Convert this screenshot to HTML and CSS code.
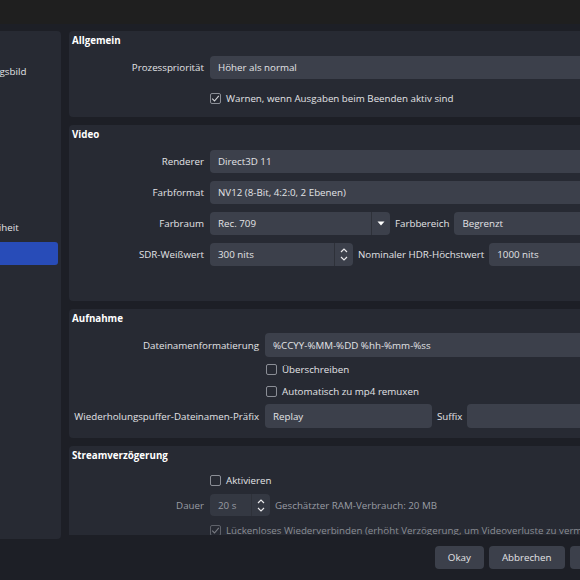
FILE: index.html
```html
<!DOCTYPE html>
<html>

<head>
    <title>Einstellungen</title>
    <link rel="stylesheet" href="styles.css">
</head>

<body>
    <div class="titlebar"></div>

    <div class="window">
        <div class="main">
            <nav class="sidebar">
                <div class="nav-item">Allgemein</div>
                <div class="nav-item">Erscheinungsbild</div>
                <div class="nav-item">Stream</div>
                <div class="nav-item">Ausgabe</div>
                <div class="nav-item">Audio</div>
                <div class="nav-item">Video</div>
                <div class="nav-item">Hotkeys</div>
                <div class="nav-item">Barrierefreiheit</div>
                <div class="nav-item selected">Erweitert</div>
            </nav>

            <div class="content">
                <section class="group">
                    <h3 class="group-title">Allgemein</h3>
                    <div class="form">
                        <div class="row">
                            <span class="label">Prozesspriorität</span>
                            <div class="field grow">Höher als normal</div>
                        </div>
                        <div class="row check-row">
                            <span class="checkbox checked">
                                <svg width="9" height="9" viewBox="0 0 9 9"><path d="M1.2 4.6l2.3 2.4L7.8 1.8" /></svg>
                            </span>
                            Warnen, wenn Ausgaben beim Beenden aktiv sind
                        </div>
                    </div>
                </section>

                <section class="group">
                    <h3 class="group-title">Video</h3>
                    <div class="form video-form">
                        <div class="row">
                            <span class="label">Renderer</span>
                            <div class="field grow">Direct3D 11</div>
                        </div>
                        <div class="row">
                            <span class="label">Farbformat</span>
                            <div class="field grow">NV12 (8-Bit, 4:2:0, 2 Ebenen)</div>
                        </div>
                        <div class="row">
                            <span class="label">Farbraum</span>
                            <div class="field combo" id="colorSpace">
                                <span class="field-text">Rec. 709</span>
                                <span class="combo-arrow">
                                    <svg width="8" height="5" viewBox="0 0 8 5"><path d="M0.5 0.5h7L4 4.5z" /></svg>
                                </span>
                            </div>
                            <span class="inline-label">Farbbereich</span>
                            <div class="field grow">Begrenzt</div>
                        </div>
                        <div class="row">
                            <span class="label">SDR-Weißwert</span>
                            <div class="field spin" id="sdrWhite">
                                <span class="field-text">300 nits</span>
                                <span class="spin-arrows">
                                    <svg width="8" height="5" viewBox="0 0 8 5"><path d="M1 4l3-3 3 3" /></svg>
                                    <svg width="8" height="5" viewBox="0 0 8 5"><path d="M1 1l3 3 3-3" /></svg>
                                </span>
                            </div>
                            <span class="inline-label">Nominaler HDR-Höchstwert</span>
                            <div class="field grow">1000 nits</div>
                        </div>
                    </div>
                </section>

                <section class="group">
                    <h3 class="group-title">Aufnahme</h3>
                    <div class="form tight">
                        <div class="row">
                            <span class="label wide">Dateinamenformatierung</span>
                            <div class="field grow">%CCYY-%MM-%DD %hh-%mm-%ss</div>
                        </div>
                        <div class="row check-row wide">
                            <span class="checkbox"></span>
                            Überschreiben
                        </div>
                        <div class="row check-row wide">
                            <span class="checkbox"></span>
                            Automatisch zu mp4 remuxen
                        </div>
                        <div class="row">
                            <span class="label wide">Wiederholungspuffer-Dateinamen-Präfix</span>
                            <div class="field" id="replayPrefix">Replay</div>
                            <span class="inline-label">Suffix</span>
                            <div class="field grow"></div>
                        </div>
                    </div>
                </section>

                <section class="group">
                    <h3 class="group-title">Streamverzögerung</h3>
                    <div class="form stream">
                        <div class="row check-row">
                            <span class="checkbox"></span>
                            Aktivieren
                        </div>
                        <div class="row disabled">
                            <span class="label">Dauer</span>
                            <div class="field spin" id="delay">
                                <span class="field-text">20 s</span>
                                <span class="spin-arrows">
                                    <svg width="8" height="5" viewBox="0 0 8 5"><path d="M1 4l3-3 3 3" /></svg>
                                    <svg width="8" height="5" viewBox="0 0 8 5"><path d="M1 1l3 3 3-3" /></svg>
                                </span>
                            </div>
                            <span class="inline-label">Geschätzter RAM-Verbrauch: 20 MB</span>
                        </div>
                        <div class="row check-row disabled">
                            <span class="checkbox checked">
                                <svg width="9" height="9" viewBox="0 0 9 9"><path d="M1.2 4.6l2.3 2.4L7.8 1.8" /></svg>
                            </span>
                            Lückenloses Wiederverbinden (erhöht Verzögerung, um Videoverluste zu vermeiden)
                        </div>
                    </div>
                </section>
            </div>
        </div>

        <div class="buttons">
            <button>Okay</button>
            <button>Abbrechen</button>
            <button>Übernehmen</button>
        </div>
    </div>
</body>

</html>
```

FILE: styles.css
```css
body {
    margin: 0;
    width: 580px;
    height: 580px;
    overflow: hidden;
    background-color: #1d1f26;
    font-family: "Open Sans", "DejaVu Sans", sans-serif;
    font-size: 9.75px;
    color: #e2e3e6;
}

.titlebar {
    height: 24px;
    background-color: #1f1f1f;
}

.window {
    width: 760px;
    margin-left: -100px;
    padding-top: 7px;
}

.main {
    display: flex;
    align-items: flex-start;
    height: 508px;
}

.sidebar {
    flex-shrink: 0;
    width: 161px;
    height: 508px;
    padding: 3px 3px 0 0;
    box-sizing: border-box;
    background-color: #272a33;
    border-radius: 4px;
}

.nav-item {
    height: 23px;
    line-height: 23px;
    padding-left: 49px;
    margin-bottom: 3px;
    border-radius: 3px;
    white-space: nowrap;
}

.nav-item.selected {
    background-color: #284cb8;
}

.content {
    flex: 1;
    margin-left: 8px;
    height: 504px;
    overflow: hidden;
}

.group {
    background-color: #272a33;
    border-radius: 4px;
    margin-bottom: 8px;
}

.group-title {
    margin: 0;
    height: 20px;
    line-height: 20px;
    padding-left: 3px;
    font-size: 9.75px;
    font-weight: bold;
    color: #ffffff;
}

.form {
    display: flex;
    flex-direction: column;
    gap: 8px;
    padding: 5px 10px 7px 0;
}

.video-form {
    padding-bottom: 35px;
}

.form.tight {
    gap: 3px;
    padding: 4px 10px 10px 0;
}

.form.tight .row {
    height: 24px;
}

.form.tight .check-row {
    height: 19px;
}

.form.stream {
    gap: 3px;
    padding-top: 3px;
}

.form.stream .row {
    height: 22px;
}

.row {
    display: flex;
    align-items: center;
    height: 23px;
    white-space: nowrap;
}

.label {
    flex-shrink: 0;
    width: 141px;
    padding-right: 6px;
    box-sizing: border-box;
    text-align: right;
}

.label.wide {
    width: 196px;
}

.inline-label {
    margin: 0 5px;
}

.field {
    display: flex;
    align-items: center;
    height: 100%;
    padding-left: 8px;
    box-sizing: border-box;
    background-color: #3c404b;
    border-radius: 4px;
    overflow: hidden;
}

.field.grow {
    flex: 1;
}

.field-text {
    flex: 1;
}

#colorSpace {
    width: 180px;
}

#sdrWhite {
    width: 143px;
}

#replayPrefix {
    width: 167px;
}

#delay {
    width: 60px;
}

.combo-arrow,
.spin-arrows {
    align-self: stretch;
    width: 18px;
    display: flex;
    flex-direction: column;
    align-items: center;
    justify-content: center;
    border-left: 1px solid #2e3139;
}

.combo-arrow path {
    fill: #ffffff;
}

.spin-arrows {
    gap: 3px;
}

.spin-arrows path {
    fill: none;
    stroke: #e8e8ea;
    stroke-width: 1.2;
}

.check-row {
    padding-left: 141px;
}

.check-row.wide {
    padding-left: 197px;
}

.checkbox {
    display: inline-flex;
    align-items: center;
    justify-content: center;
    width: 11px;
    height: 11px;
    margin-right: 5px;
    box-sizing: border-box;
    border: 1px solid #8b8e96;
    border-radius: 2px;
}

.checkbox path {
    fill: none;
    stroke: #d4d5d8;
    stroke-width: 1.1;
}

.disabled {
    color: #999ca3;
}

.disabled .field {
    background-color: #343842;
}

.check-row.disabled {
    color: #8a8d94;
}

.disabled .checkbox {
    border-color: #5f626a;
}

.disabled .checkbox path {
    stroke: #7a7d84;
}

.buttons {
    display: flex;
    justify-content: flex-end;
    gap: 5px;
    padding: 7px 4px 0 0;
}

button {
    height: 23px;
    padding: 0 13px;
    border: none;
    border-radius: 4px;
    background-color: #3c404b;
    color: #e2e3e6;
    font-family: "Open Sans", "DejaVu Sans", sans-serif;
    font-size: 9.75px;
}
```
